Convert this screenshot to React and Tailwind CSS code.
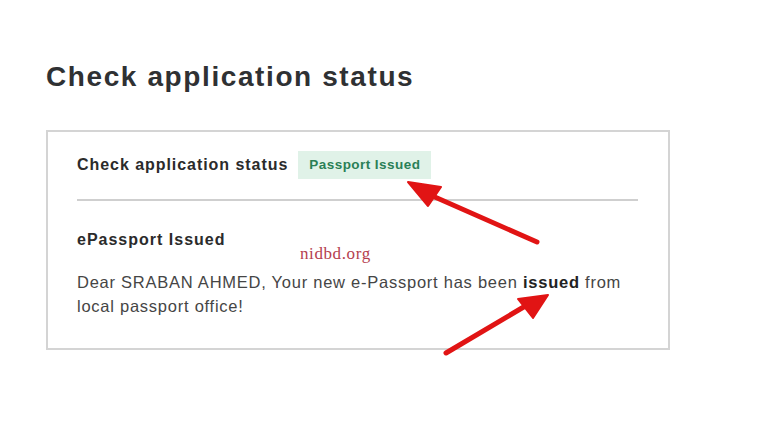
import React from 'react';

function Arrows() {
  return (
    <svg className="absolute inset-0 pointer-events-none" width="768" height="430" viewBox="0 0 768 430">
      <g stroke="#e11414" strokeWidth="5" strokeLinecap="round" fill="#e11414">
        <line x1="537" y1="242" x2="428" y2="194" />
        <polygon points="408,182 441,187 428,206" strokeWidth="2" strokeLinejoin="round" />
        <line x1="446" y1="353" x2="527" y2="305" />
        <polygon points="548,295 533,318 518,299" strokeWidth="2" strokeLinejoin="round" />
      </g>
    </svg>
  );
}

export default function App() {
  return (
    <div className="relative w-[768px] h-[430px] bg-white overflow-hidden" style={{ fontFamily: '"Liberation Sans", Arial, sans-serif' }}>
      <div className="pl-[46px] pt-[59px]">
        <h1 className="text-[28px] leading-[36px] font-bold tracking-[1.6px] text-[#2f3133]">Check application status</h1>
        <div className="mt-[35px] w-[624px] border-2 border-[#d4d4d4] px-[29px] pt-[19px] pb-[30px]">
          <div className="flex items-center gap-[10px] pb-[20px] border-b-2 border-[#cfcfcf] mr-[1px]">
            <span className="text-[16px] font-bold tracking-[0.95px] text-[#2b2b2b]">Check application status</span>
            <span className="bg-[#e0f2e8] text-[#2a7f56] text-[13.5px] font-bold tracking-[0.45px] px-[11px] h-[28px] flex items-center">Passport Issued</span>
          </div>
          <div className="relative mt-[28px]">
            <div className="text-[16px] font-bold tracking-[1px] text-[#2b2b2b] leading-[22px]">ePassport Issued</div>
            <div className="absolute left-[223px] top-[12px] text-[17px] tracking-[0.6px] text-[#b5404f]" style={{ fontFamily: '"Liberation Serif", serif' }}>nidbd.org</div>
            <p className="mt-[19px] text-[16.5px] leading-[24px] tracking-[0.75px] text-[#454545]">
              Dear SRABAN AHMED, Your new e-Passport has been <b className="text-[#222]">issued</b> from<br />local passport office!
            </p>
          </div>
        </div>
      </div>
      <Arrows />
    </div>
  );
}
